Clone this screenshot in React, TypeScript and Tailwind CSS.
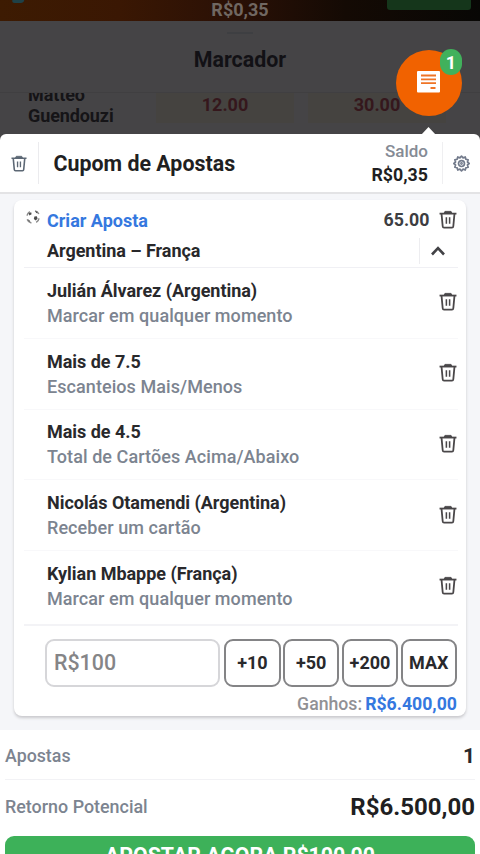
import type { ReactNode } from "react";

const selections = [
  { name: "Julián Álvarez (Argentina)", market: "Marcar em qualquer momento" },
  { name: "Mais de 7.5", market: "Escanteios Mais/Menos" },
  { name: "Mais de 4.5", market: "Total de Cartões Acima/Abaixo" },
  { name: "Nicolás Otamendi (Argentina)", market: "Receber um cartão" },
  { name: "Kylian Mbappe (França)", market: "Marcar em qualquer momento" },
];

function TrashIcon({ className }: { className: string }) {
  return (
    <svg viewBox="0 0 20 20" fill="none" stroke="currentColor" strokeWidth="2" className={className}>
      <path d="M0.6 3.4H19.4" />
      <path d="M5.6 3.2L6.6 1H13.4L14.4 3.2Z" fill="currentColor" strokeWidth="1" />
      <path d="M2.8 3.5L4.1 17.5Q4.2 19 5.6 19H14.4Q15.8 19 15.9 17.5L17.2 3.5" />
      <path d="M8.2 7.6V14.8M11.8 7.6V14.8" strokeWidth="1.7" />
    </svg>
  );
}

function GearIcon() {
  return (
    <svg viewBox="0 0 24 24" fill="none" stroke="currentColor" strokeWidth="2.4" className="size-[17px] text-[#737b8c]">
      <path d="M12 1.5L14.2 4L17.3 2.8L18.2 6L21.4 6.8L20.4 9.9L22.8 12L20.4 14.1L21.4 17.2L18.2 18L17.3 21.2L14.2 20L12 22.5L9.8 20L6.7 21.2L5.8 18L2.6 17.2L3.6 14.1L1.2 12L3.6 9.9L2.6 6.8L5.8 6L6.7 2.8L9.8 4Z" strokeLinejoin="round" />
      <circle cx="12" cy="12" r="4.2" />
      <circle cx="12" cy="12" r="0.8" />
    </svg>
  );
}

function BallIcon() {
  return (
    <svg viewBox="0 0 14 14" className="size-[14px] text-[#4d4d4d]">
      <path d="M1 5.6Q1.6 3 3.8 1.6M9 1Q11.6 1.4 12.8 4M13 8.4Q12.6 11 10.2 12.4M5.4 13Q2.4 12.4 1.2 9.4" fill="none" stroke="#8a8a8a" strokeWidth="1.5" />
      <path d="M2.6 3.2L5.2 2.2L5.6 4.2L3.4 5.6ZM8.4 6.4L10.8 6.2L11.6 8.6L9.8 10.4L7.8 9ZM9.4 1L11.8 2.2L10.2 3.2ZM1.6 9.6L3.4 10L4.2 12.2Z" fill="currentColor" />
    </svg>
  );
}

function StakeButton({ children }: { children: ReactNode }) {
  return (
    <button className="h-[48px] w-[56.5px] rounded-[9px] border-2 border-[#848486] text-center text-[18px] font-bold text-[#29292c]">
      {children}
    </button>
  );
}

export default function App() {
  return (
    <div className="relative flex h-[854px] w-[480px] flex-col overflow-hidden bg-[#454446] font-['Roboto',sans-serif]">
      <div className="relative flex h-[21px] shrink-0 justify-center overflow-hidden bg-[linear-gradient(90deg,#3d1b02_0%,#3a1703_25%,#291006_50%,#140a04_72%,#080705_100%)]">
        <span className="-mt-px text-[18px] leading-[22px] font-bold text-[#706761]">R$0,35</span>
        <span className="absolute top-0 right-[9px] h-[10px] w-[84px] rounded-b-[3px] bg-[#15361b]" />
        <span className="absolute top-0 left-[12px] h-[3px] w-[12px] -skew-x-12 rounded-b-sm bg-[#1f4147]" />
      </div>
      <div className="relative flex h-[71px] shrink-0 items-center justify-center pt-[8px]">
        <span className="absolute top-[11px] h-[2px] w-[26px] bg-[#3e3f42]" />
        <span className="text-[21.4px] font-bold text-[#121115]">Marcador</span>
      </div>
      <div className="flex h-[42px] shrink-0 overflow-hidden border-t border-[#403f41] text-[18px] font-bold text-[#151417]">
        <div className="-mt-[9px] w-[156px] pl-[28px] leading-[21px] tracking-[-0.1px]">
          Matteo
          <br />
          Guendouzi
        </div>
        <div className="flex h-[30px] w-[138px] justify-center bg-[#454340] leading-[23px] text-[#35171c]">12.00</div>
        <div className="ml-[14px] flex h-[30px] w-[138px] justify-center bg-[#454340] leading-[23px] text-[#35171c]">30.00</div>
      </div>

      <div className="flex flex-1 flex-col overflow-hidden rounded-t-[6px] bg-white">
        <header className="flex h-[60px] shrink-0 items-center border-b-2 border-[#e3e3e5]">
          <div className="flex h-[42px] w-[39px] items-center border-r border-[#ebebee] pl-[11px]">
            <TrashIcon className="h-[17px] w-[16px] text-[#5d6875]" />
          </div>
          <h1 className="ml-[14.5px] flex-1 pt-[3px] text-[21.4px] font-bold whitespace-nowrap text-[#1f1f22]">Cupom de Apostas</h1>
          <div className="flex flex-col items-end pr-[14px] leading-[23px]">
            <span className="text-[17px] font-medium text-[#858b95]">Saldo</span>
            <span className="text-[17.8px] font-bold text-[#1f1f22]">R$0,35</span>
          </div>
          <div className="flex h-[42px] w-[38px] items-center border-l border-[#efeff1] pl-[10px]">
            <GearIcon />
          </div>
        </header>

        <div className="h-[536px] shrink-0 bg-[#f5f6f9] px-[14px] pt-[6px]">
          <section className="flex h-[516px] flex-col rounded-[8px] bg-white shadow-[0_2px_3px_#c9c9cd]">
            <div className="ml-[10px] flex h-[68px] w-[434px] shrink-0 flex-col border-b border-[#f0f0f4]">
              <div className="flex h-[37px] shrink-0 items-center pt-[4px]">
                <div className="-mt-[7px] w-[23px] pl-[2px]">
                  <BallIcon />
                </div>
                <span className="flex-1 text-[18px] font-bold text-[#3578df]">Criar Aposta</span>
                <span className="text-[17.8px] font-bold text-[#3d3d41]">65.00</span>
                <TrashIcon className="mr-[1.5px] -mt-[2px] ml-[9px] h-[19px] w-[18px] text-[#4a4749]" />
              </div>
              <div className="flex h-[28px] items-center">
                <span className="flex-1 pb-[2px] pl-[23px] text-[18px] font-bold whitespace-nowrap tracking-[-0.04px] text-[#28282b]">
                  Argentina – França
                </span>
                <div className="flex h-[26px] w-[39px] items-center border-l border-[#ededf0] pl-[11px]">
                  <svg viewBox="0 0 14 10" fill="none" stroke="#424246" strokeWidth="2.6" className="h-[10px] w-[14px]">
                    <path d="M1 8.5L7 2.2L13 8.5" />
                  </svg>
                </div>
              </div>
            </div>

            {selections.map((item) => (
              <div
                key={item.name}
                className="ml-[10px] flex h-[70.8px] w-[434px] shrink-0 items-center border-b border-[#f8f8fa] pr-[1.5px] pl-[23px] nth-[6]:border-transparent"
              >
                <div className="flex flex-1 flex-col leading-[25px] whitespace-nowrap">
                  <span className="text-[18px] font-bold tracking-[-0.03px] text-[#29292c]">{item.name}</span>
                  <span className="text-[18px] font-medium tracking-[0.07px] text-[#7c8490]">{item.market}</span>
                </div>
                <TrashIcon className="mb-[2px] h-[19px] w-[18px] text-[#4a4749]" />
              </div>
            ))}

            <div className="mt-[2px] ml-[10px] flex h-[92px] w-[434px] shrink-0 flex-col border-t-2 border-[#f3f3f6] pt-[13px] pr-[1px] pl-[20.5px]">
              <div className="flex gap-[2.3px]">
                <div className="mr-[2px] flex h-[48px] w-[175.5px] items-center rounded-[9px] border-2 border-[#d6d6d9] pt-px pl-[7.5px] text-[21.4px] font-medium text-[#858587]">
                  R$100
                </div>
                <StakeButton>+10</StakeButton>
                <StakeButton>+50</StakeButton>
                <StakeButton>+200</StakeButton>
                <StakeButton>MAX</StakeButton>
              </div>
              <div className="flex h-[29px] shrink-0 items-center justify-end gap-[3px] pt-[6px] text-[17.7px]">
                <span className="font-medium text-[#919195]">Ganhos:</span>
                <span className="font-bold text-[#3578df]">R$6.400,00</span>
              </div>
            </div>
          </section>
        </div>

        <footer className="flex flex-col px-[5px]">
          <div className="flex h-[50px] items-center justify-between border-b border-[#f2f2f5] pt-[4px]">
            <span className="text-[17.8px] font-medium text-[#7c8490]">Apostas</span>
            <span className="text-[21px] font-bold text-[#29292c]">1</span>
          </div>
          <div className="flex h-[56px] items-center justify-between pb-[2px]">
            <span className="text-[17.9px] font-medium text-[#7c8490]">Retorno Potencial</span>
            <span className="text-[24px] font-bold text-[#1f1f22]">R$6.500,00</span>
          </div>
          <button className="h-[48px] rounded-t-[9px] bg-[#3db159] pb-[8px] text-[21.3px] font-bold whitespace-nowrap text-white">
            APOSTAR AGORA R$100,00
          </button>
        </footer>
      </div>

      <div className="absolute top-[50px] left-[396px] flex size-[66px] items-center justify-center rounded-full bg-[#f16200]">
        <svg viewBox="0 0 23 22" className="mr-[1px] mb-[2px] h-[22px] w-[23px]">
          <rect width="23" height="21.5" rx="1" fill="white" />
          <path d="M4 4.5H19M4 8.3H19M4 12.1H19M13.5 17H18.5" stroke="#ef7426" strokeWidth="1.8" />
        </svg>
        <span className="absolute -top-px left-[44px] flex h-[26px] w-[22px] items-center justify-center rounded-full bg-[#41b15c] text-[18px] font-bold text-white">
          1
        </span>
      </div>
      <div className="absolute top-[127px] left-[421px] h-[8px] w-[15px] bg-white [clip-path:polygon(50%_0,100%_100%,0_100%)]" />
    </div>
  );
}
